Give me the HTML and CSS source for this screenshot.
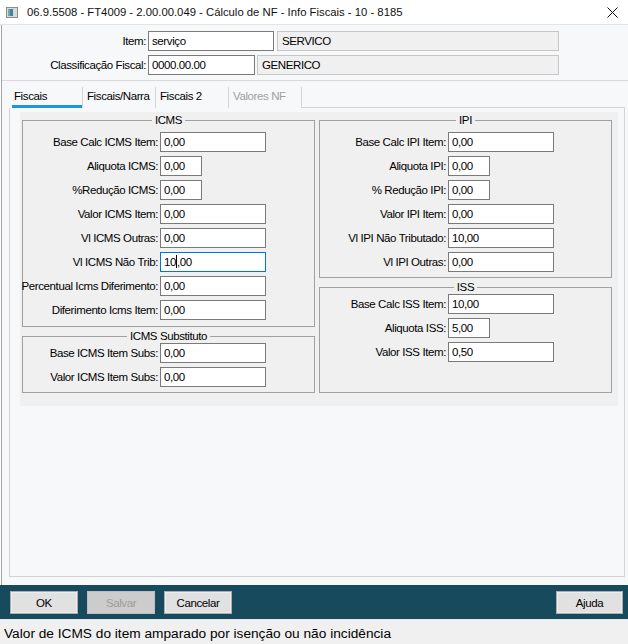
FILE: index.html
```html
<!DOCTYPE html>
<html lang="pt-BR">
<head>
  <meta charset="UTF-8" />
  <title>Cálculo de NF - Info Fiscais</title>
  <link rel="stylesheet" href="styles.css">
</head>
<body>
  <div class="window">
    <div class="titlebar">
      <svg class="app-icon" width="12" height="11" viewBox="0 0 12 11">
        <rect x="0.5" y="0.5" width="11" height="10" fill="#d9d9d9" stroke="#8c8c8c"/>
        <rect x="2" y="2" width="5" height="7" fill="#3f8597"/>
        <rect x="2" y="2" width="2" height="7" fill="#6fa9b5"/>
      </svg>
      <span class="title">06.9.5508 - FT4009 - 2.00.00.049 - Cálculo de NF - Info Fiscais - 10 - 8185</span>
      <svg class="close" width="11" height="11" viewBox="0 0 11 11">
        <path d="M0.5 0.5 L10.5 10.5 M10.5 0.5 L0.5 10.5" stroke="#111" stroke-width="1"/>
      </svg>
    </div>

    <div class="frame">
      <div class="item-header">
        <label class="hlabel">Item:</label>
        <div class="hrow">
          <div class="field item-code">serviço</div>
          <div class="field readonly item-desc">SERVICO</div>
        </div>
        <label class="hlabel">Classificação Fiscal:</label>
        <div class="hrow tight">
          <div class="field class-code">0000.00.00</div>
          <div class="field readonly class-desc">GENERICO</div>
        </div>
      </div>

      <div class="tabs">
        <div class="tab active">Fiscais</div>
        <div class="tab">Fiscais/Narra</div>
        <div class="tab">Fiscais 2</div>
        <div class="tab disabled">Valores NF</div>
        <div class="tab-fill"></div>
      </div>

      <div class="tab-page">
        <div class="tab-body">
          <div class="col">
            <fieldset class="group icms">
              <legend>ICMS</legend>
              <div class="row"><span class="lbl">Base Calc ICMS Item:</span><span class="field wide">0,00</span></div>
              <div class="row"><span class="lbl">Aliquota ICMS:</span><span class="field narrow">0,00</span></div>
              <div class="row"><span class="lbl">%Redução ICMS:</span><span class="field narrow">0,00</span></div>
              <div class="row"><span class="lbl">Valor ICMS Item:</span><span class="field wide">0,00</span></div>
              <div class="row"><span class="lbl">Vl ICMS Outras:</span><span class="field wide">0,00</span></div>
              <div class="row"><span class="lbl">Vl ICMS Não Trib:</span><span class="field wide focus">10<span class="caret"></span>,00</span></div>
              <div class="row"><span class="lbl">Percentual Icms Diferimento:</span><span class="field wide">0,00</span></div>
              <div class="row"><span class="lbl">Diferimento Icms Item:</span><span class="field wide">0,00</span></div>
            </fieldset>
            <fieldset class="group subst">
              <legend>ICMS Substituto</legend>
              <div class="row"><span class="lbl">Base ICMS Item Subs:</span><span class="field wide">0,00</span></div>
              <div class="row"><span class="lbl">Valor ICMS Item Subs:</span><span class="field wide">0,00</span></div>
            </fieldset>
          </div>
          <div class="col">
            <fieldset class="group ipi">
              <legend>IPI</legend>
              <div class="row"><span class="lbl">Base Calc IPI Item:</span><span class="field wide">0,00</span></div>
              <div class="row"><span class="lbl">Aliquota IPI:</span><span class="field narrow">0,00</span></div>
              <div class="row"><span class="lbl">% Redução IPI:</span><span class="field narrow">0,00</span></div>
              <div class="row"><span class="lbl">Valor IPI Item:</span><span class="field wide">0,00</span></div>
              <div class="row"><span class="lbl">Vl IPI Não Tributado:</span><span class="field wide">10,00</span></div>
              <div class="row"><span class="lbl">Vl IPI Outras:</span><span class="field wide">0,00</span></div>
            </fieldset>
            <fieldset class="group iss">
              <legend>ISS</legend>
              <div class="row"><span class="lbl">Base Calc ISS Item:</span><span class="field wide">10,00</span></div>
              <div class="row"><span class="lbl">Aliquota ISS:</span><span class="field narrow">5,00</span></div>
              <div class="row"><span class="lbl">Valor ISS Item:</span><span class="field wide">0,50</span></div>
            </fieldset>
          </div>
        </div>
      </div>
    </div>

    <div class="buttonbar">
      <button class="btn">OK</button>
      <button class="btn" disabled>Salvar</button>
      <button class="btn">Cancelar</button>
      <button class="btn help">Ajuda</button>
    </div>

    <div class="statusbar">Valor de ICMS do item amparado por isenção ou não incidência</div>
  </div>
</body>
</html>
```

FILE: styles.css
```css
* {
  box-sizing: border-box;
}
body {
  margin: 0;
  background: #fff;
  font-family: "Liberation Sans", Arial, sans-serif;
  font-size: 11.5px;
  letter-spacing: -0.4px;
  color: #000;
}
.window {
  width: 628px;
  height: 644px;
  display: flex;
  flex-direction: column;
  overflow: hidden;
}

/* title bar */
.titlebar {
  flex: none;
  height: 25px;
  display: flex;
  align-items: center;
  padding-left: 6px;
  background: #fff;
  border-bottom: 1px solid #e4e4e4;
}
.title {
  margin-left: 9px;
  font-size: 11.3px;
  letter-spacing: 0;
  color: #111;
}
.close {
  margin-left: auto;
  margin-right: 10px;
}

/* dialog body */
.frame {
  flex: 1;
  display: flex;
  flex-direction: column;
  margin-left: 1px;
  border-left: 1px solid #a3a3a3;
  background: #f7f8fa;
  padding-bottom: 8px;
}
.item-header {
  display: grid;
  grid-template-columns: 144px auto;
  column-gap: 2px;
  row-gap: 4px;
  align-items: center;
  padding: 6px 0 5px;
  border-bottom: 1px solid #d9d9d9;
}
.hlabel {
  text-align: right;
  white-space: nowrap;
}
.hrow {
  display: flex;
  gap: 3px;
}
.hrow.tight {
  gap: 2px;
}
.item-code { width: 126px; }
.item-desc { width: 282px; }
.class-code { width: 107px; }
.class-desc { width: 302px; }

/* edit boxes */
.field {
  display: block;
  height: 20px;
  line-height: 18px;
  padding: 0 3px;
  border: 1px solid #7a7a7a;
  background: #fff;
  white-space: nowrap;
  overflow: hidden;
}
.field.readonly {
  background: #f0f0f0;
  border-color: #c6c6c6;
  padding-left: 4px;
}
.field.focus {
  border-color: #0078d7;
}
.caret {
  display: inline-block;
  width: 1px;
  height: 13px;
  background: #000;
  vertical-align: -2px;
}
.wide { width: 106px; }
.narrow { width: 42px; }

/* tabs */
.tabs {
  display: flex;
  height: 27px;
  padding-top: 6px;
  margin: 0 3px 0 8px;
}
.tab {
  width: 73px;
  padding: 3px 0 0 4px;
  border-right: 1px solid #d6d6d6;
  white-space: nowrap;
}
.tab.active {
  background: linear-gradient(#1c96e0, #1c96e0) no-repeat 2px 100% / 71px 3px;
}
.tab.disabled {
  color: #a0a0a0;
}
.tab-fill {
  flex: 1;
  border-bottom: 1px solid #d2d2d2;
}
.tab-page {
  flex: 1;
  margin: 0 3px 0 7px;
  border: 1px solid #d2d2d2;
  border-top: none;
  padding: 4px 6px 0 10px;
}
.tab-body {
  display: grid;
  grid-template-columns: 1fr 1fr;
  column-gap: 4px;
  padding: 0 6px 13px 2px;
  background: #f0f0f0;
}
.col {
  display: flex;
  flex-direction: column;
}

/* group boxes */
.group {
  margin: 2px 0 0;
  padding: 6px 0;
  min-width: 0;
  border: 1px solid #a0a0a0;
}
.group legend {
  margin: 0 auto;
  padding: 0 3px;
  line-height: 12px;
}
.group.ipi {
  padding-bottom: 5px;
}
.group.subst,
.group.iss {
  margin-top: 3px;
  padding: 1px 0 5px;
}
.group.iss {
  flex: 1;
}
.row {
  display: flex;
  align-items: center;
  gap: 2px;
}
.row + .row {
  margin-top: 4px;
}
.lbl {
  width: 135px;
  display: flex;
  justify-content: flex-end;
  white-space: nowrap;
}
.ipi .lbl,
.iss .lbl {
  width: 126px;
}

/* bottom buttons */
.buttonbar {
  flex: none;
  height: 34px;
  display: flex;
  gap: 9px;
  padding: 6px 5px 0 10px;
  background: #184a5e;
}
.btn {
  width: 68px;
  height: 23px;
  padding: 0;
  border: 1px solid #adadad;
  background: #e1e1e1;
  box-shadow: inset 0 0 0 1px #ececec;
  font: inherit;
  letter-spacing: inherit;
  color: #000;
}
.btn:disabled {
  background: #cccccc;
  border-color: #bfbfbf;
  box-shadow: none;
  color: #9c9c9c;
}
.btn.help {
  margin-left: auto;
  width: 67px;
}
.statusbar {
  flex: none;
  height: 25px;
  padding: 4px 0 0 4px;
  line-height: 20px;
  font-size: 13.7px;
  letter-spacing: 0;
  background: #f0f0f0;
  border-top: 1px solid #e3e8eb;
  white-space: nowrap;
}
```
